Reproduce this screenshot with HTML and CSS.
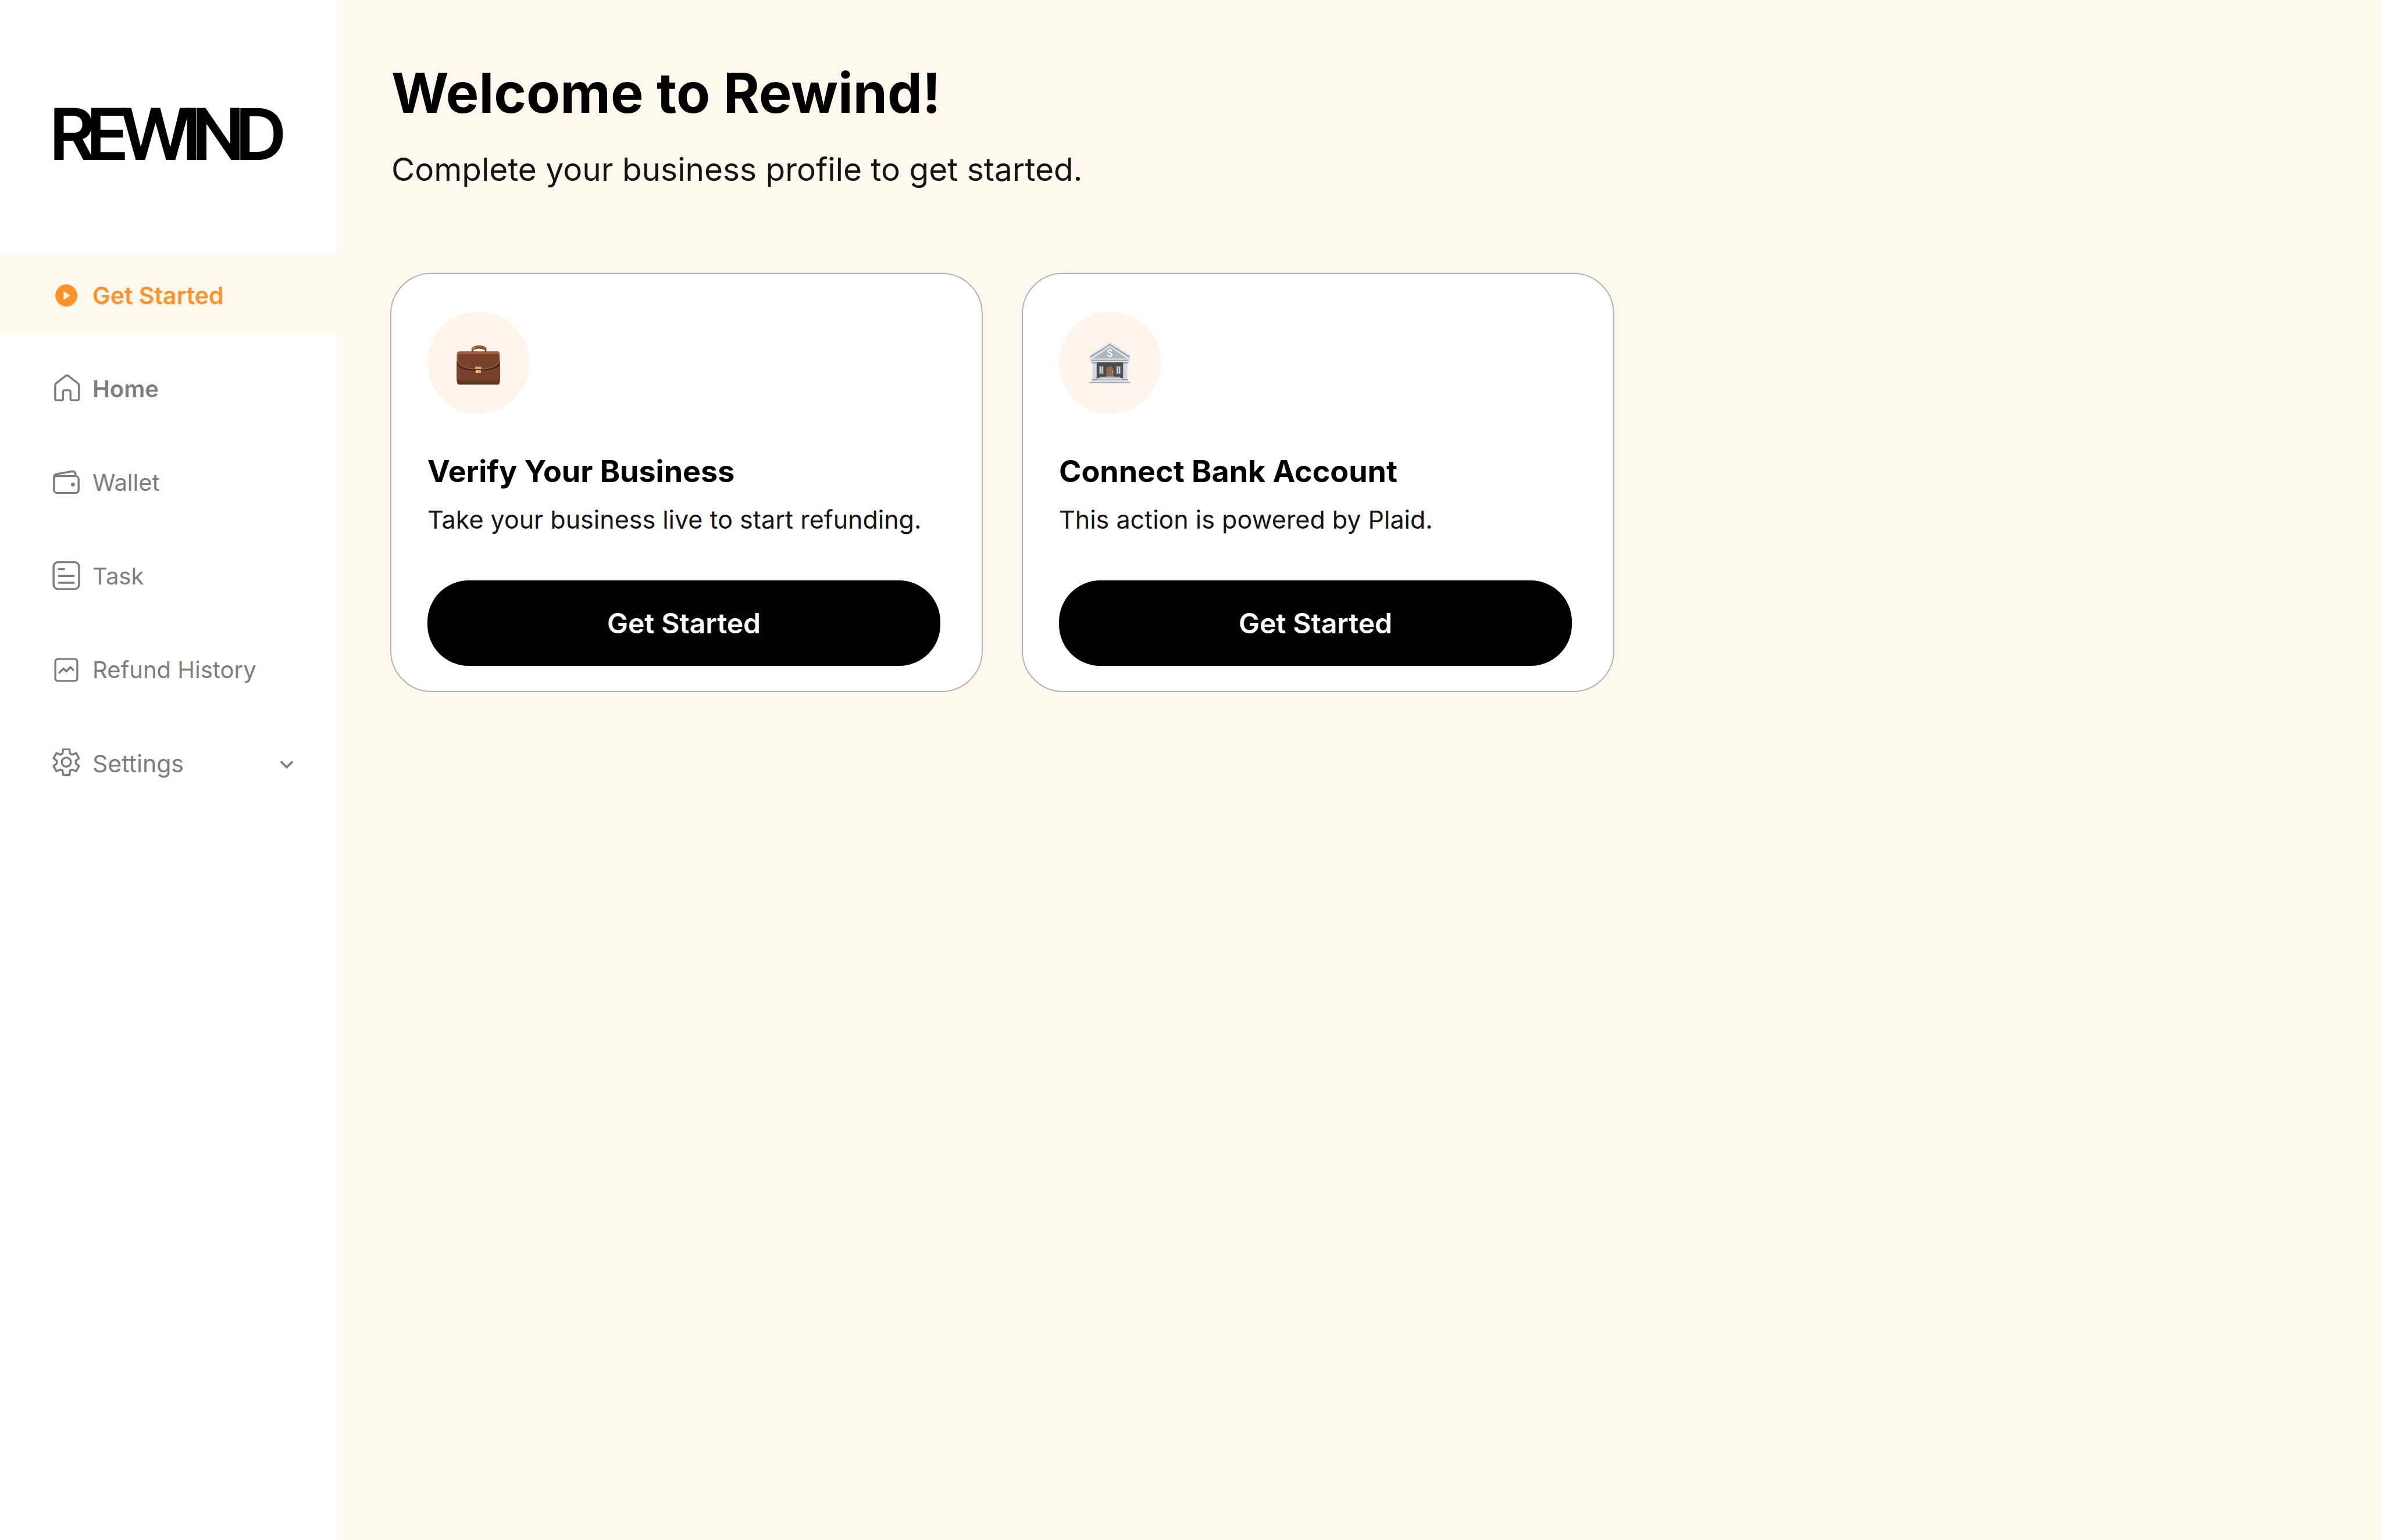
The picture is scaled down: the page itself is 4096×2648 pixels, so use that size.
FILE: index.html
```html
<!DOCTYPE html>
<html lang="en">
<head>
<meta charset="utf-8">
<meta name="viewport" content="width=device-width, initial-scale=1">
<title>Rewind – Get Started</title>
<link rel="stylesheet" href="styles.css">
</head>
<body>
<aside class="sidebar">
  <div class="logo">REWIND</div>
  <nav class="nav" aria-label="Main">
    <a class="nav-item nav-item--active" href="#get-started" aria-current="page">
      <svg class="nav-icon" viewBox="0 0 88 88" aria-hidden="true">
        <circle cx="44" cy="44" r="32" fill="currentColor"/>
        <path d="M36.3 33.2Q36.3 31 38.4 32.5L53.2 42.6Q54.8 44 53.2 45.3L38.4 55.4Q36.3 56.8 36.3 54.6Z" fill="#fff8ee"/>
      </svg>
      <span>Get Started</span>
    </a>
    <a class="nav-item nav-item--strong" href="#home">
      <svg class="nav-icon nav-icon--line" viewBox="0 0 88 88" aria-hidden="true">
        <path d="M11.7 33Q11.7 29.5 14.3 27.4L42 5.6Q46 2.9 50 5.6L78 27.4Q80.6 29.5 80.6 33V72.6a4 4 0 0 1-4 4H60.2a4 4 0 0 1-4-4V52a4.5 4.5 0 0 0-4.5-4.5H39a4.5 4.5 0 0 0-4.5 4.5V72.6a4 4 0 0 1-4 4H15.7a4 4 0 0 1-4-4Z"/>
      </svg>
      <span>Home</span>
    </a>
    <a class="nav-item" href="#wallet">
      <svg class="nav-icon nav-icon--line" viewBox="0 0 88 88" aria-hidden="true">
        <rect x="8.2" y="24.8" width="71.6" height="49" rx="8.5"/>
        <path d="M8.2 34V28Q8.2 20.5 15.5 19L60.5 11Q69.5 10 70.7 19V24.8"/>
        <circle cx="63.3" cy="49.3" r="5.7" fill="currentColor" stroke="none"/>
      </svg>
      <span>Wallet</span>
    </a>
    <a class="nav-item" href="#task">
      <svg class="nav-icon nav-icon--line" viewBox="0 0 88 88" aria-hidden="true">
        <rect x="7" y="2.7" width="74" height="78.3" rx="13"/>
        <path d="M20 22.7H40M20 42.7H68M20 62.7H68"/>
      </svg>
      <span>Task</span>
    </a>
    <a class="nav-item" href="#refund-history">
      <svg class="nav-icon nav-icon--line" viewBox="0 0 88 88" aria-hidden="true">
        <rect x="12" y="12" width="64" height="64" rx="7.5"/>
        <path d="M23.7 52L36 39.7L44 48L56 35.7L64.3 44.3" stroke-linecap="round"/>
      </svg>
      <span>Refund History</span>
    </a>
    <button class="nav-item nav-item--toggle" type="button" aria-expanded="false">
      <svg class="nav-icon nav-icon--line" viewBox="0 0 88 88" aria-hidden="true">
        <path d="M34.7 2.3H53.3L55 15.3L61.3 18L72.7 13.3L81 28.3L71.7 35.7V43.7L81 51.1L72.7 66.1L61.3 61.7L55 64L53.3 77.1H34.7L33 64L26.7 61.7L15.3 66.1L7 51.1L16.3 43.7V35.7L7 28.3L15.3 13.3L26.7 18L33 15.3Z"/>
        <circle cx="44" cy="39.7" r="13.3"/>
      </svg>
      <span>Settings</span>
      <svg class="nav-chevron" viewBox="0 0 40 40" aria-hidden="true">
        <path d="M3.2 14L20 30.5L36.8 14"/>
      </svg>
    </button>
  </nav>
</aside>

<main class="main">
  <header class="intro">
    <h1 class="title">Welcome to Rewind!</h1>
    <p class="subtitle">Complete your business profile to get started.</p>
  </header>

  <div class="cards">
    <section class="card">
      <div class="card-badge">
        <svg viewBox="30 12 888 888" aria-hidden="true">
          <path d="M417 362V346Q411 336 418 325Q438 306 481 306Q524 306 543 328Q548 337 543 350V362H531V348Q512 334 481 334Q448 334 429 348V362Z" fill="#79422b"/>
          <path d="M415 345Q412 333 421 324Q440 306 481 306Q524 306 541 326Q549 336 545 348Q538 346 532 340Q515 324 481 323Q450 323 431 342Q423 347 415 345Z" fill="#a55d3e"/>
          <path d="M417 341Q418 323 451 314Q457 318 450 324Q436 330 426 339Z" fill="#ca8550"/>
          <path d="M288 384Q288 360 308 360H640Q660 360 660 384Q666 470 665 560Q665 648 648 648H302Q284 648 284 560Q283 470 288 384Z" fill="#79422b"/>
          <path d="M286 598Q300 612 340 612L590 614Q640 614 663 599Q660 648 646 648H303Q289 648 286 598Z" fill="#5f3a24"/>
          <path d="M289 438Q296 515 475 517Q654 515 660 438V462Q654 525 475 527Q296 525 289 462Z" fill="#3f2522"/>
          <path d="M288 384Q288 360 308 360H640Q660 360 660 384V420Q660 514 475 514Q288 514 288 420Z" fill="#9a623b"/>
          <path d="M288 400V384Q288 360 308 360H640Q660 360 660 384V400Z" fill="#a55d3e"/>
          <path d="M295 400Q295 383 310 383H640Q654 383 654 400V420Q654 508 475 508Q295 508 295 420Z" fill="#79422b"/>
          <rect x="447" y="513" width="54" height="8" fill="#3f2522"/>
          <rect x="451" y="520" width="46" height="35" fill="#3f2522"/>
          <rect x="447" y="492" width="54" height="21" fill="#c78a54"/>
          <rect x="450" y="494" width="48" height="19" fill="#e6a468"/>
          <rect x="451" y="520" width="46" height="29" fill="#e6a468"/>
          <path d="M450 496h6v16h-6zM454 524h8v20h-8z" fill="#ffe78d"/>
        </svg>
      </div>
      <h2 class="card-title">Verify Your Business</h2>
      <p class="card-text">Take your business live to start refunding.</p>
      <button class="card-button" type="button">Get Started</button>
    </section>

    <section class="card">
      <div class="card-badge">
        <svg viewBox="21 12 888 888" aria-hidden="true">
          <path d="M465 276L645 391V406L634 402L465 294L296 402L285 406V391Z" fill="#dbe3eb"/>
          <path d="M465 293L636 402V411H628L465 306L302 411H294V402Z" fill="#929598"/>
          <path d="M465 305L645 420V431H285V420Z" fill="#dbe3eb"/>
          <path d="M465 320L614 420H316Z" fill="#abb7be"/>
          <path d="M482 358Q481 345 465 345Q448 346 448 358Q448 368 465 372Q483 377 483 388Q482 400 465 401Q447 400 448 387M465 336V346M465 400V411" fill="none" stroke="#fff" stroke-width="9"/>
          <rect x="302" y="431" width="327" height="10" fill="#929598"/>
          <rect x="285" y="441" width="360" height="12" fill="#dbe3eb"/>
          <rect x="348" y="453" width="234" height="148" fill="#4c4c4c"/>
          <path d="M308 453h46v12h-46zM578 453h46v12h-46z" fill="#929598"/>
          <path d="M312 465h36v135h-36zM582 465h36v135h-36z" fill="#dbe3eb"/>
          <path d="M323 470V596M332 470V596M341 470V596M591 470V596M600 470V596M609 470V596" stroke="#c5ced6" stroke-width="4"/>
          <path d="M369 485h42v73h-42zM519 485h42v73h-42z" fill="#8c6549"/>
          <path d="M375 490h12v63h-12zM393 490h12v63h-12zM525 490h12v63h-12zM543 490h12v63h-12z" fill="#b2d7ee"/>
          <path d="M432 578V519A33 34 0 0 1 498 519V578Z" fill="#7b5840"/>
          <path d="M438 578V519A27 28 0 0 1 492 519V578Z" fill="#a67c60"/>
          <path d="M443 519A22 24 0 0 1 462 494V519ZM468 494A22 24 0 0 1 487 519H468ZM443 525h19v18h-19zM468 525h19v18h-19zM443 550h19v20h-19zM468 550h19v20h-19z" fill="#8c6549"/>
          <rect x="481" y="531" width="10" height="18" fill="#929598"/>
          <rect x="483" y="534" width="6" height="7" fill="#dbe3eb"/>
          <rect x="429" y="575" width="72" height="5" fill="#929598"/>
          <rect x="375" y="579" width="180" height="12" fill="#abb7be"/>
          <rect x="354" y="591" width="222" height="11" fill="#dbe3eb"/>
          <rect x="350" y="602" width="230" height="10" fill="#abb7be"/>
          <path d="M308 600h46v12h-46zM578 600h46v12h-46z" fill="#929598"/>
          <rect x="308" y="612" width="316" height="13" fill="#dbe3eb"/>
          <rect x="285" y="624" width="360" height="12" fill="#abb7be"/>
        </svg>
      </div>
      <h2 class="card-title">Connect Bank Account</h2>
      <p class="card-text">This action is powered by Plaid.</p>
      <button class="card-button" type="button">Get Started</button>
    </section>
  </div>
</main>
</body>
</html>
```
FILE: styles.css
```css
* {
  box-sizing: border-box;
  margin: 0;
  padding: 0;
}

body {
  display: flex;
  min-height: 100vh;
  background: #fff8ee;
  color: #000;
  font-family: Inter, "Liberation Sans", sans-serif;
}

button {
  border: 0;
  background: none;
  font: inherit;
  cursor: pointer;
}

/* Sidebar */

.sidebar {
  flex: 0 0 578px;
  background: #fff;
}

.logo {
  padding: 157px 0 134px 87px;
  font-family: "Inter Tight", "Inter Display", Inter, sans-serif;
  font-size: 122px;
  font-weight: 600;
  line-height: 148px;
  letter-spacing: -0.095em;
}

.nav {
  display: flex;
  flex-direction: column;
  gap: 24px;
}

.nav-item {
  display: flex;
  align-items: center;
  gap: 19px;
  width: 100%;
  height: 137px;
  padding: 0 73px 0 88px;
  color: #7d7d7d;
  font-size: 40px;
  line-height: 48px;
  text-decoration: none;
}

.nav-item--strong {
  font-weight: 600;
}

.nav-item--active {
  background: #fff8ee;
  color: #ff9228;
  font-size: 41px;
  font-weight: 600;
}

.nav-item--toggle {
  font-size: 41px;
}

.nav-icon {
  flex: none;
  width: 52px;
  height: 52px;
}

.nav-icon--line {
  fill: none;
  stroke: currentColor;
  stroke-width: 5.8;
  stroke-linejoin: round;
}

.nav-chevron {
  width: 24px;
  height: 24px;
  margin-left: auto;
  fill: none;
  stroke: currentColor;
  stroke-width: 6;
}

/* Main area */

.main {
  flex: 1;
  min-width: 0;
  padding: 102px 93px;
}

.intro {
  padding-left: 2px;
}

.title {
  font-size: 95px;
  font-weight: 700;
  line-height: 116px;
}

.subtitle {
  margin-top: 40px;
  color: #141414;
  font-size: 55px;
  line-height: 66px;
}

.cards {
  display: flex;
  flex-wrap: wrap;
  gap: 67px;
  margin-top: 145px;
}

.card {
  flex: 0 1 1019px;
  padding: 65px 71px 43px 62px;
  border: 2px solid #b3b3b3;
  border-radius: 71px;
  background: #fff;
}

.card-badge {
  width: 175px;
  height: 175px;
  border-radius: 50%;
  background: #fff4ea;
}

.card-badge svg {
  display: block;
}

.card-title {
  margin-top: 68px;
  font-size: 52px;
  font-weight: 700;
  line-height: 64px;
}

.card-text {
  margin-top: 24px;
  color: #141414;
  font-size: 43px;
  line-height: 52px;
}

.card-button {
  display: block;
  width: 100%;
  height: 147px;
  margin-top: 79px;
  border-radius: 71px;
  background: #000;
  color: #fff;
  font-size: 48px;
  font-weight: 600;
}
```
